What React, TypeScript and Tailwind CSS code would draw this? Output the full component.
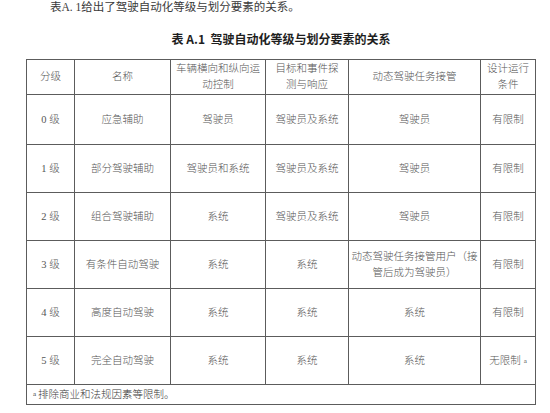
import React from "react";

const serif = { fontFamily: '"Liberation Serif", "Noto Sans CJK SC", serif' };

const rows: [string, string, string, string, React.ReactNode, React.ReactNode][] = [
  ["0 级", "应急辅助", "驾驶员", "驾驶员及系统", "驾驶员", "有限制"],
  ["1 级", "部分驾驶辅助", "驾驶员和系统", "驾驶员及系统", "驾驶员", "有限制"],
  ["2 级", "组合驾驶辅助", "系统", "驾驶员及系统", "驾驶员", "有限制"],
  [
    "3 级",
    "有条件自动驾驶",
    "系统",
    "系统",
    <>
      动态驾驶任务接管用户（接
      <br />
      管后成为驾驶员）
    </>,
    "有限制",
  ],
  ["4 级", "高度自动驾驶", "系统", "系统", "系统", "有限制"],
  [
    "5 级",
    "完全自动驾驶",
    "系统",
    "系统",
    "系统",
    <>
      无限制<sup className="ml-[3px] text-[7px] relative -top-[1px]">a</sup>
    </>,
  ],
];

function Cell({ children }: { children: React.ReactNode }) {
  return (
    <div className="bg-white flex items-center justify-center text-center text-[10.5px] leading-[16px] font-light text-[#555555]">
      <div>{children}</div>
    </div>
  );
}

export default function App() {
  return (
    <div className="w-[550px] h-[413px] bg-white overflow-hidden" style={serif}>
      <div className="h-[14px] pl-[50px] text-[11.5px] leading-[14px] text-[#3a3a3a]">
        表A. 1给出了驾驶自动化等级与划分要素的关系。
      </div>
      <div
        className="mt-[17px] h-[16px] w-[510px] ml-[26px] text-center text-[12px] leading-[16px] font-bold text-[#1e1e1e]"
        style={{ fontFamily: '"Noto Sans CJK SC", sans-serif' }}
      >
        表 A.1&nbsp;&nbsp;驾驶自动化等级与划分要素的关系
      </div>
      <div className="mt-[12px] ml-[26px] w-[510px] bg-[#5c5c5c] p-px grid gap-px grid-cols-[47px_95px_94px_82px_131px_54px] grid-rows-[34px_49px_47px_47px_47px_47px_47px_19px]">
        <Cell>分级</Cell>
        <Cell>名称</Cell>
        <Cell>
          车辆横向和纵向运
          <br />
          动控制
        </Cell>
        <Cell>
          目标和事件探
          <br />
          测与响应
        </Cell>
        <Cell>动态驾驶任务接管</Cell>
        <Cell>
          设计运行
          <br />
          条件
        </Cell>
        {rows.map((r, i) => (
          <React.Fragment key={i}>
            {r.map((c, j) => (
              <Cell key={j}>{c}</Cell>
            ))}
          </React.Fragment>
        ))}
        <div className="col-span-6 bg-white flex items-center pl-[6px] text-[10.5px] leading-[16px] font-light text-[#3a3a3a]">
          <sup className="text-[7px] mr-[2px] relative -top-[1px]">a</sup>排除商业和法规因素等限制。
        </div>
      </div>
    </div>
  );
}
